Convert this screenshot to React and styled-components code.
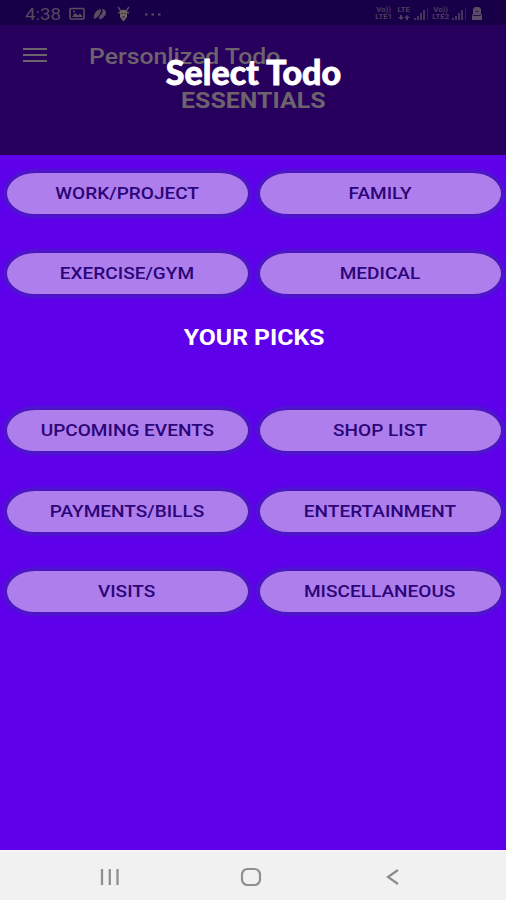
import React from 'react';
import styled, { createGlobalStyle } from 'styled-components';

const GlobalStyle = createGlobalStyle`
  body {
    margin: 0;
    background: #6200ee;
    font-family: Roboto, "Liberation Sans", sans-serif;
  }
`;

const Screen = styled.div`
  position: relative;
  display: flex;
  flex-direction: column;
  width: 506px;
  height: 900px;
  overflow: hidden;
  background: #5f00eb;
`;

const Header = styled.header`
  height: 155px;
  background: #27005e;
  color: #6d636c;
`;

const StatusBar = styled.div`
  display: flex;
  align-items: center;
  justify-content: space-between;
  height: 25px;
  padding: 2px 20px 0 25px;
  box-sizing: border-box;
  background: #170047;
  color: #58485f;
`;

const StatusGroup = styled.div`
  display: flex;
  align-items: center;

  svg {
    display: block;
  }
`;

const Clock = styled.span`
  width: 36px;
  margin-right: 8px;
  font-size: 17px;
  line-height: 20px;
  white-space: nowrap;
`;

const Stretch = styled.span`
  display: inline-block;
  white-space: nowrap;
  transform: scaleX(${(props) => props.$x});
  transform-origin: ${(props) => props.$origin || 'center'};
`;

const Carrier = styled.span`
  display: flex;
  flex-direction: column;
  align-items: center;
  width: ${(props) => props.$w}px;
  font-size: 7px;
  font-weight: 700;
  line-height: 7px;
  color: #4d3d60;
`;

const Toolbar = styled.div`
  display: flex;
  align-items: center;
  height: 60px;
  padding-left: 23px;

  svg {
    display: block;
    margin-right: 42px;
  }
`;

const AppName = styled.h1`
  margin: 2px 0 0;
  font-size: 22.5px;
  font-weight: 500;
  line-height: 28px;
`;

const SectionTitle = styled.h2`
  margin: ${(props) => props.$margin};
  font-size: 21.5px;
  font-weight: 700;
  line-height: 26px;
  text-align: center;
`;

const DialogTitle = styled.div`
  position: absolute;
  top: 52px;
  left: 0;
  width: 507px;
  color: #fff;
  font-family: Lato, sans-serif;
  font-size: 34px;
  font-weight: 900;
  line-height: 40px;
  text-align: center;
  -webkit-text-stroke: 0.8px #fff;
`;

const Content = styled.main`
  flex: 1;
  padding: 18px 5px 0 7px;
  color: #fff;
`;

const Grid = styled.div`
  display: grid;
  grid-template-columns: 241px 241px;
  grid-auto-rows: 41px;
  column-gap: 12px;
  row-gap: 39.3px;
`;

const Pill = styled.button`
  padding: 0 1px 0 0;
  border: 0;
  border-radius: 28px / 20.5px;
  background: #ae7eec;
  box-shadow: 0 0 1px 1px #4b16b8, 0 0 2px 4px rgba(66, 36, 186, 0.6);
  color: #2c0578;
  font-family: inherit;
  font-size: 17px;
  font-weight: 500;
  line-height: 41px;
`;

const NavBar = styled.nav`
  display: flex;
  align-items: center;
  height: 50px;
  padding: 3px 106px 0 100px;
  box-sizing: border-box;
  gap: 120px;
  border-top: 1px solid #fbf3ff;
  background: #f1f1f1;

  svg {
    display: block;
  }

  svg:last-child {
    margin-left: 4px;
  }
`;

const essentials = ['WORK/PROJECT', 'FAMILY', 'EXERCISE/GYM', 'MEDICAL'];

const picks = [
  'UPCOMING EVENTS',
  'SHOP LIST',
  'PAYMENTS/BILLS',
  'ENTERTAINMENT',
  'VISITS',
  'MISCELLANEOUS',
];

function ButtonGrid({ items }) {
  return (
    <Grid>
      {items.map((label) => (
        <Pill key={label} type="button">
          <Stretch $x={1.12}>{label}</Stretch>
        </Pill>
      ))}
    </Grid>
  );
}

function Signal() {
  return (
    <svg width="17" height="14" viewBox="0 0 17 14" fill="#44355a">
      <path d="M1 11h2v2H1zM4 9h2v4H4zM7 6h2v7H7zM10 3h2v10h-2z" />
      <path d="M14 1h1v12h-1z" opacity=".6" />
    </svg>
  );
}

function NotificationIcons() {
  return (
    <svg width="94" height="18" viewBox="0 0 94 18" fill="none" stroke="#5c4c5f">
      {/* picture */}
      <rect x="1" y="3.5" width="14" height="10.5" rx="1" strokeWidth="1.6" />
      <path d="M3 12l3-4 3 2.500 2-2 3 3.500z" fill="#5c4c5f" stroke="none" />
      <circle cx="5" cy="6.500" r="1" fill="#5c4c5f" stroke="none" />
      {/* leaf pair */}
      <path d="M25 14c-1-5 2-9 7-10 0 4-2 8-7 10z" fill="#5c4c5f" stroke="none" />
      <path d="M30.500 14c-1-4 5-5 3-9.500 5 0 4 8-3 9.500z" fill="#5c4c5f" strokeWidth=".8" />
      {/* mascot */}
      <path d="M49 2l3 4M60 2l-3 4M49 8l3-1M60 8l-3-1" strokeWidth="1.4" />
      <path d="M51 6l3.500-1.500L58 6v6l-3.500 4.500L51 12z" fill="#716362" stroke="none" />
      <path d="M53 8v1M56 8v1M53.500 12h2" stroke="#170047" />
      {/* overflow dots */}
      <path d="M76 9.500h2.500M82.500 9.500h2.500M89 9.500h2.500" strokeWidth="2" />
    </svg>
  );
}

function App() {
  return (
    <Screen>
      <GlobalStyle />
      <Header>
        <StatusBar>
          <StatusGroup>
            <Clock><Stretch $x={1.1} $origin="left">4:38</Stretch></Clock>
            <NotificationIcons />
          </StatusGroup>
          <StatusGroup>
            <Carrier $w={20}>
              <Stretch $x={1.1}>Vo))</Stretch>
              <Stretch $x={1.1}>LTE1</Stretch>
            </Carrier>
            <Carrier $w={19}>
              <Stretch $x={1.1}>LTE</Stretch>
              <svg width="12" height="7" viewBox="0 0 12 7">
                <path d="M0 3h2V1h2v2h2L3 6zM6 4l3-3 3 3h-2v2H8V4z" fill="#4d3d60" />
              </svg>
            </Carrier>
            <Signal />
            <Carrier $w={21}>
              <Stretch $x={1.1}>Vo))</Stretch>
              <Stretch $x={1.1}>LTE2</Stretch>
            </Carrier>
            <Signal />
            <svg width="18" height="15" viewBox="0 0 18 15">
              <path d="M7 1h4l2 2v5l1 1v5H4V9l1-1V3z" fill="#5b4c66" />
              <path d="M7.500 5.500h3M5 9.500h8" fill="none" stroke="#251050" />
            </svg>
          </StatusGroup>
        </StatusBar>
        <Toolbar>
          <svg width="24" height="18" viewBox="0 0 24 18">
            <path d="M0 3h24M0 9h24M0 15h24" stroke="#6d636c" strokeWidth="2" />
          </svg>
          <AppName><Stretch $x={1.1} $origin="left">Personlized Todo</Stretch></AppName>
        </Toolbar>
        <SectionTitle $margin="3px 0 0"><Stretch $x={1.16}>ESSENTIALS</Stretch></SectionTitle>
      </Header>
      <Content>
        <ButtonGrid items={essentials} />
        <SectionTitle $margin="31px 0 59px"><Stretch $x={1.15}>YOUR PICKS</Stretch></SectionTitle>
        <ButtonGrid items={picks} />
      </Content>
      <NavBar>
        <svg width="20" height="18" viewBox="0 0 20 18">
          <path d="M2 1v16M9.800 1v16M17.500 1v16" stroke="#909090" strokeWidth="2.300" />
        </svg>
        <svg width="22" height="20" viewBox="0 0 22 20">
          <rect x="2" y="2" width="18" height="16" rx="5.500" fill="none" stroke="#909090" strokeWidth="2.200" />
        </svg>
        <svg width="14" height="18" viewBox="0 0 14 18">
          <path d="M12 2L2 9l10 7" fill="none" stroke="#8c8c8c" strokeWidth="2.200" />
        </svg>
      </NavBar>
      <DialogTitle>Select Todo</DialogTitle>
    </Screen>
  );
}

export default App;
